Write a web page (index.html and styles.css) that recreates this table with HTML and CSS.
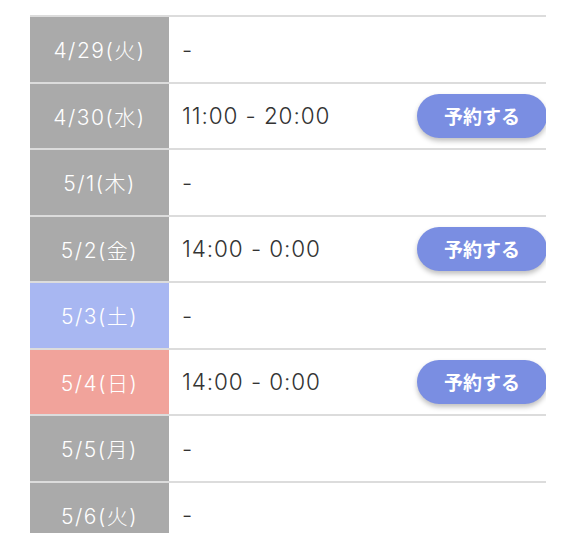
FILE: index.html
```html
<!DOCTYPE html>
<html lang="ja">
<head>
<meta charset="utf-8">
<link rel="stylesheet" href="styles.css">
</head>
<body>
<div class="schedule">
  <div class="row">
    <div class="date">4/29(火)</div>
    <div class="slot"><span class="time">-</span></div>
  </div>
  <div class="row">
    <div class="date">4/30(水)</div>
    <div class="slot"><span class="time">11:00 - 20:00</span><button class="reserve">予約する</button></div>
  </div>
  <div class="row">
    <div class="date">5/1(木)</div>
    <div class="slot"><span class="time">-</span></div>
  </div>
  <div class="row">
    <div class="date">5/2(金)</div>
    <div class="slot"><span class="time">14:00 - 0:00</span><button class="reserve">予約する</button></div>
  </div>
  <div class="row">
    <div class="date sat">5/3(土)</div>
    <div class="slot"><span class="time">-</span></div>
  </div>
  <div class="row">
    <div class="date sun">5/4(日)</div>
    <div class="slot"><span class="time">14:00 - 0:00</span><button class="reserve">予約する</button></div>
  </div>
  <div class="row">
    <div class="date">5/5(月)</div>
    <div class="slot"><span class="time">-</span></div>
  </div>
  <div class="row">
    <div class="date">5/6(火)</div>
    <div class="slot"><span class="time">-</span></div>
  </div>
</div>
</body>
</html>
```
FILE: styles.css
```css
html, body {
  margin: 0;
  padding: 0;
  background: #fff;
}
body {
  padding: 15px 30px 0 30px;
  font-family: "Inter", "Noto Sans CJK JP", sans-serif;
}
.schedule {
  width: 516px;
  height: 518px;
  overflow: hidden;
  display: flex;
  flex-direction: column;
}
.row {
  flex: 0 0 66.5px;
  box-sizing: border-box;
  border-top: 2px solid #dcdcdc;
  display: flex;
}
.date {
  width: 139px;
  flex: 0 0 139px;
  background: #aaaaaa;
  color: #fff;
  font-size: 21px;
  font-weight: 300;
  letter-spacing: 1.5px;
  display: flex;
  align-items: center;
  justify-content: center;
}
.date.sat {
  background: #a8b7f2;
}
.date.sun {
  background: #f1a39b;
}
.slot {
  flex: 1;
  display: flex;
  align-items: center;
  justify-content: space-between;
  padding-left: 13px;
}
.time {
  font-size: 22.5px;
  font-weight: 300;
  letter-spacing: 0.9px;
  color: #333;
}
.reserve {
  border: none;
  width: 130px;
  height: 44px;
  border-radius: 22px;
  background: #7a8ee2;
  color: #fff;
  font-family: "Noto Sans CJK JP", sans-serif;
  font-size: 19px;
  font-weight: 700;
  box-shadow: 0 3px 5px rgba(0, 0, 0, 0.25);
  margin-right: -1px;
  padding: 0;
}
```
